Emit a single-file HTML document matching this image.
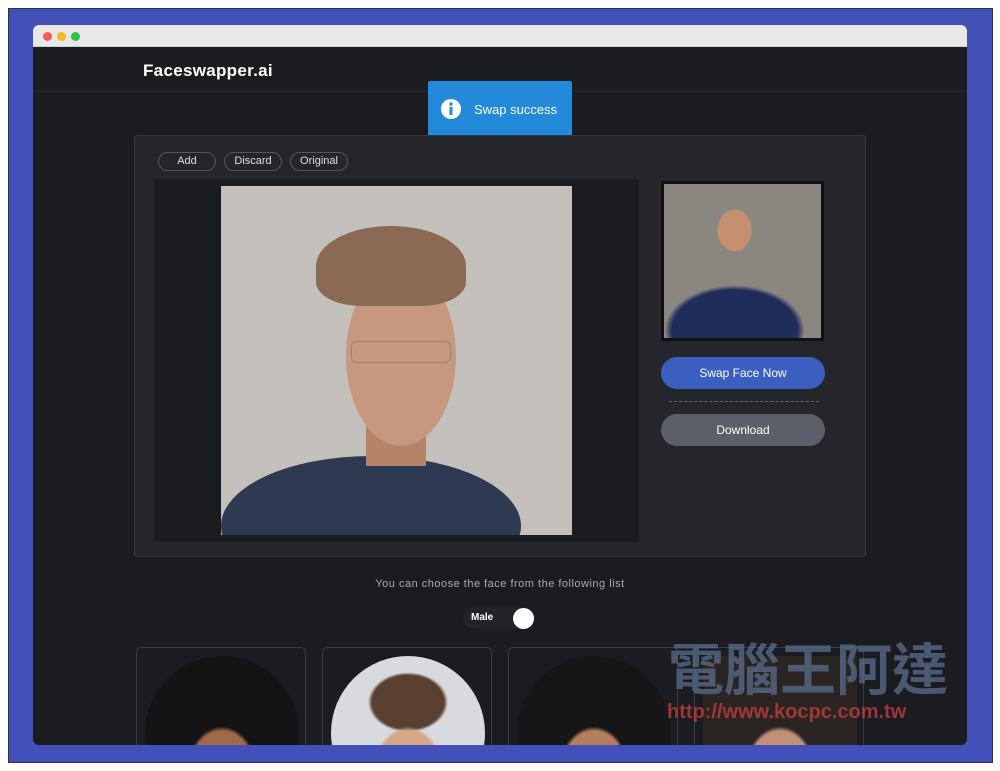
<!DOCTYPE html><html><head><style>
*{margin:0;padding:0;box-sizing:border-box}
html,body{width:1000px;height:771px;overflow:hidden}
body{background:#fff;position:relative;font-family:"Liberation Sans",sans-serif}
.frame{position:absolute;left:8px;top:8px;width:985px;height:755px;background:#4350b8;border:1px solid #333}
.win{position:absolute;left:33px;top:25px;width:934px;height:720px;background:#1b1c20;border-radius:6px;overflow:hidden}
.bar{height:22px;background:#e8e8e8;border-bottom:1px solid #ccc}
.dot{position:absolute;top:7px;width:9px;height:9px;border-radius:50%}
.hdr{position:absolute;top:22px;left:0;right:0;height:45px;border-bottom:1px solid #2a2b30}
.logo{position:absolute;left:110px;top:36px;color:#fff;font-size:17px;font-weight:bold;letter-spacing:.3px}
.toast{position:absolute;left:395px;top:56px;width:144px;height:57px;background:#2389d9;border-radius:2px;color:#fff;font-size:13px}
.panel{position:absolute;left:101px;top:110px;width:732px;height:422px;background:#24262b;border:1px solid #35373c;border-radius:3px}
.btn{position:absolute;top:16px;height:19px;border:1px solid #55575c;border-radius:10px;color:#ddd;font-size:11px;text-align:center;line-height:17px}
.stage{position:absolute;left:19px;top:43px;width:485px;height:363px;background:#1b1c20}
.photo{position:absolute;left:67px;top:7px;width:351px;height:349px;overflow:hidden;background:#c3c0bb}
.thumb{position:absolute;left:526px;top:45px;width:163px;height:160px;background:#111;padding:3px}
.thumb div{width:100%;height:100%;background:radial-gradient(ellipse 18px 22px at 45% 30%,#c49070 90%,transparent 100%),radial-gradient(ellipse 70px 45px at 45% 95%,#1f2d5a 90%,transparent 100%),#8a8680}
.pill{position:absolute;left:526px;width:164px;height:32px;border-radius:16px;color:#fff;font-size:12px;text-align:center;line-height:32px}
.card{position:absolute;top:622px;width:170px;height:98px;border:1px solid #3a3c41;border-bottom:none;border-radius:5px 5px 0 0;overflow:hidden}
.card div{position:absolute;left:8px;top:8px;width:154px;height:154px;border-radius:50%}
</style></head><body>
<div class="frame"></div>
<div class="win">
<div class="bar"></div>
<div class="dot" style="left:10px;background:#f25c54"></div><div class="dot" style="left:24px;background:#f5b921"></div><div class="dot" style="left:38px;background:#2fc048"></div>
<div class="hdr"></div>
<div class="logo">Faceswapper.ai</div>
<div class="toast"><svg style="position:absolute;left:13px;top:18px" width="20" height="20"><circle cx="10" cy="10" r="10" fill="#fff"/><rect x="8.5" y="8" width="3" height="8" fill="#2389d9"/><circle cx="10" cy="5" r="1.7" fill="#2389d9"/></svg><span style="position:absolute;left:46px;top:21px">Swap success</span></div>
<div class="panel">
<div class="btn" style="left:23px;width:58px">Add</div>
<div class="btn" style="left:89px;width:58px">Discard</div>
<div class="btn" style="left:155px;width:58px">Original</div>
<div class="stage"><div class="photo">
<div style="position:absolute;left:0;top:270px;width:300px;height:140px;border-radius:50%;background:#2e3a52"></div>
<div style="position:absolute;left:145px;top:200px;width:60px;height:80px;background:#b58468"></div>
<div style="position:absolute;left:125px;top:80px;width:110px;height:180px;border-radius:50%;background:#c8987e"></div>
<div style="position:absolute;left:95px;top:40px;width:150px;height:80px;border-radius:50% 50% 30% 30%;background:#8a6a52"></div>
<div style="position:absolute;left:130px;top:155px;width:100px;height:22px;border:1px solid #888;border-radius:6px"></div>
</div></div>
<div class="thumb"><div></div></div>
<div class="pill" style="top:221px;background:#3b5fc0">Swap Face Now</div>
<div style="position:absolute;left:534px;top:265px;width:150px;border-top:1px dashed #666"></div>
<div class="pill" style="top:278px;background:#5c5f6a">Download</div>
</div>
<div style="position:absolute;left:0;right:0;top:553px;text-align:center;color:#aaa;font-size:11px;letter-spacing:.5px">You can choose the face from the following list</div>
<div style="position:absolute;left:430px;top:582px;width:72px;height:22px;border-radius:11px;background:#222327"></div>
<div style="position:absolute;left:438px;top:587px;color:#fff;font-size:10px;font-weight:bold">Male</div>
<div style="position:absolute;left:480px;top:583px;width:21px;height:21px;border-radius:50%;background:#fff"></div>
<div class="card" style="left:103px"><div style="background:radial-gradient(ellipse 35px 45px at 50% 75%,#a06a4a 90%,transparent 100%),#141414"></div></div>
<div class="card" style="left:289px"><div style="background:radial-gradient(ellipse 35px 45px at 50% 75%,#d6a88a 90%,transparent 100%),radial-gradient(ellipse 40px 30px at 50% 30%,#5a4030 90%,transparent 100%),#d8dadd"></div></div>
<div class="card" style="left:475px"><div style="background:radial-gradient(ellipse 35px 45px at 50% 75%,#b47e5e 90%,transparent 100%),#161616"></div></div>
<div class="card" style="left:661px"><div style="border-radius:0;background:radial-gradient(ellipse 35px 45px at 50% 75%,#c09078 90%,transparent 100%),#2a2522"></div></div>
<div style="position:absolute;left:635px;top:612px;color:rgba(90,110,140,.75);font-size:56px;font-weight:bold;font-family:'Noto Sans CJK TC',sans-serif;line-height:60px">電腦王阿達</div>
<div style="position:absolute;left:634px;top:676px;color:rgba(190,60,60,.8);font-size:20px;font-weight:bold">http://www.kocpc.com.tw</div>
</div>
</body></html>
